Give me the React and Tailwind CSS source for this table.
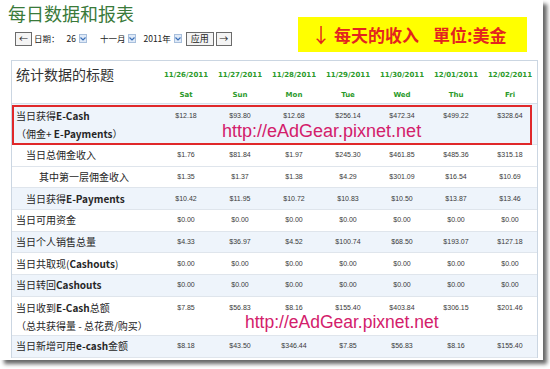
const days = [
  ['11/26/2011', 'Sat'],
  ['11/27/2011', 'Sun'],
  ['11/28/2011', 'Mon'],
  ['11/29/2011', 'Tue'],
  ['11/30/2011', 'Wed'],
  ['12/01/2011', 'Thu'],
  ['12/02/2011', 'Fri'],
];

const zero = ['$0.00', '$0.00', '$0.00', '$0.00', '$0.00', '$0.00', '$0.00'];

const rows = [
  { lines: ['当日获得E-Cash', '（佣金+ E-Payments）'], pad: 'pl-[4px]', blue: true, tall: 'h-[41px] pt-[3px]', values: ['$12.18', '$93.80', '$12.68', '$256.14', '$472.34', '$499.22', '$328.64'], boxed: true },
  { lines: ['当日总佣金收入'], pad: 'pl-[14px]', values: ['$1.76', '$81.84', '$1.97', '$245.30', '$461.85', '$485.36', '$315.18'] },
  { lines: ['其中第一层佣金收入'], pad: 'pl-[27px]', values: ['$1.35', '$1.37', '$1.38', '$4.29', '$301.09', '$16.54', '$10.69'] },
  { lines: ['当日获得E-Payments'], pad: 'pl-[14px]', blue: true, values: ['$10.42', '$11.95', '$10.72', '$10.83', '$10.50', '$13.87', '$13.46'] },
  { lines: ['当日可用资金'], pad: 'pl-[4px]', values: zero },
  { lines: ['当日个人销售总量'], pad: 'pl-[4px]', blue: true, values: ['$4.33', '$36.97', '$4.52', '$100.74', '$68.50', '$193.07', '$127.18'] },
  { lines: ['当日共取现(Cashouts)'], pad: 'pl-[4px]', values: zero },
  { lines: ['当日转回Cashouts'], pad: 'pl-[4px]', blue: true, values: zero },
  { lines: ['当日收到E-Cash总额', '（总共获得量 - 总花费/购买）'], pad: 'pl-[4px]', tall: 'h-[39px] pt-[2px]', values: ['$7.85', '$56.83', '$8.16', '$155.40', '$403.84', '$306.15', '$201.46'] },
  { lines: ['当日新增可用e-cash金额'], pad: 'pl-[4px]', blue: true, values: ['$8.18', '$43.50', '$346.44', '$7.85', '$56.83', '$8.16', '$155.40'] },
];

// latin words in the labels render heavier than the chinese
const Label = ({ text }) =>
  text.split(/([A-Za-z][A-Za-z-]*)/).map((part, i) =>
    /^[A-Za-z]/.test(part) ? (
      <span key={i} className="font-semibold">{part}</span>
    ) : (
      <span key={i}>{part}</span>
    )
  );

const Chevron = () => (
  <span className="w-[8px] h-[9px] bg-[#dfeaf8] border border-[#a8bfdc] flex items-center justify-center">
    <svg width="6" height="4" viewBox="0 0 6 4">
      <path d="M0.5 0.5 L3 3 L5.5 0.5" fill="none" stroke="#3a6fb8" strokeWidth="1.2" />
    </svg>
  </span>
);

const Select = ({ text, className }) => (
  <span className={`flex items-center gap-[3px] ${className}`}>
    <span>{text}</span>
    <Chevron />
  </span>
);

const Btn = ({ children, className }) => (
  <span className={`h-[14px] border border-[#6b6b6b] bg-[#f4f4f4] flex items-center justify-center leading-none ${className}`}>
    {children}
  </span>
);

export default function App() {
  return (
    <div className="w-[550px] h-[369px] bg-white relative overflow-hidden font-['Noto_Sans_CJK_SC',sans-serif] text-[#262626]">
      <div className="w-[543px] h-[360px] bg-white shadow-[4px_4px_4px_rgba(0,0,0,0.6)] relative">
        <div className="flex">
          <div className="flex flex-col">
            <h1 className="h-[26px] leading-[26px] pl-[8px] text-[18px] text-[#3a7a3a] font-normal">每日数据和报表</h1>
            <div className="mt-[5px] h-[15px] flex items-center text-[8.5px] text-[#222]">
              <Btn className="ml-[15px] w-[17px] text-[9px]">←</Btn>
              <span className="ml-[2px]">日期：</span>
              <Select text="26" className="ml-[7px]" />
              <Select text="十一月" className="ml-[13px]" />
              <Select text="2011年" className="ml-[7px]" />
              <Btn className="ml-[4px] w-[28px] text-[9px]">应用</Btn>
              <Btn className="ml-[2px] w-[16px] text-[9px]">→</Btn>
            </div>
          </div>
          <div className="ml-auto mr-[16px] mt-[17px] w-[229px] h-[35px] bg-[#ffff00] flex items-center pl-[13px] text-[#e3241f] font-bold text-[17px] leading-none">
            <span className="text-[20px] font-normal mr-[3px]">↓</span>
            <span>每天的收入</span>
            <span className="ml-[14px]">單位:美金</span>
          </div>
        </div>

        <div className="mt-[8px] ml-[11px] w-[527px] border-t border-l border-r border-[#cbd6e2]">
          <div className="grid grid-cols-[147px_repeat(7,54px)] h-[43px] border-b border-[#d6dee8]">
            <div className="pl-[4px] pt-[3px] text-[14px] leading-[20px] text-[#333]">统计数据的标题</div>
            {days.map(([d, w]) => (
              <div key={d} className="flex flex-col items-center pt-[9px] font-['DejaVu_Sans',sans-serif] font-bold text-[7px] leading-[10px] text-[#2b9a2b]">
                <span>{d}</span>
                <span className="mt-[10px]">{w}</span>
              </div>
            ))}
          </div>

          {rows.map((r, i) => (
            <div
              key={i}
              className={`relative grid grid-cols-[147px_repeat(7,54px)] border-b border-[#dfe5ec] ${r.blue ? 'bg-[#eef4fb]' : 'bg-white'} ${r.tall ? r.tall : 'h-[21.7px] items-center'}`}
            >
              <div className={`${r.pad} text-[10px] leading-[18px]`}>
                {r.lines.map((l) => (
                  <div key={l}>
                    <Label text={l} />
                  </div>
                ))}
              </div>
              {r.values.map((v, j) => (
                <div key={j} className="text-center font-['Liberation_Sans',sans-serif] text-[7px] leading-[18px] text-[#3a3a3a]">
                  {v}
                </div>
              ))}
              {r.boxed && (
                <div className="absolute top-[1px] left-0 right-[5px] bottom-[-1px] border-2 border-[#e0282a]" />
              )}
            </div>
          ))}
        </div>

        <span className="absolute left-[222px] top-[122px] font-['Liberation_Sans',sans-serif] text-[18px] leading-[18px] text-[#d3206b]">
          http://eAdGear.pixnet.net
        </span>
        <span className="absolute left-[245px] top-[313px] font-['Liberation_Sans',sans-serif] text-[17.5px] leading-[18px] text-[#d3206b]">
          http://eAdGear.pixnet.net
        </span>
      </div>
    </div>
  );
}
